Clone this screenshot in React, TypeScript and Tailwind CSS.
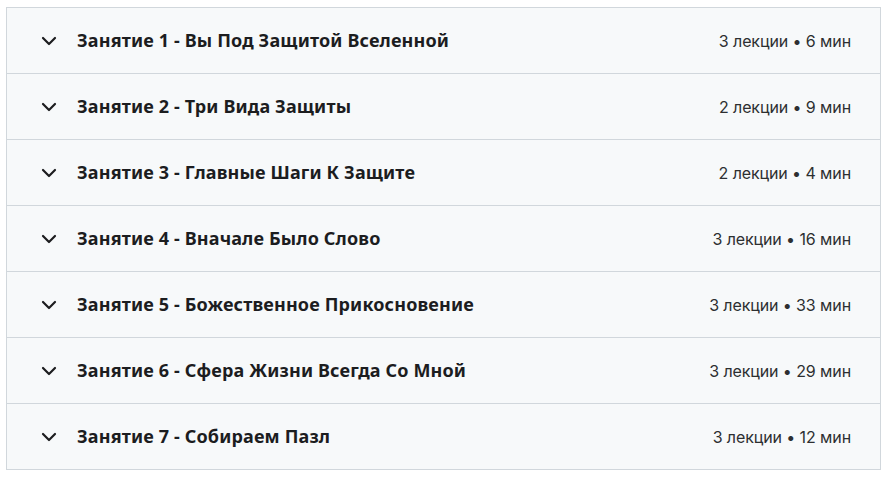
import { ChevronDown } from "lucide-react";

const lessons = [
  { title: "Занятие 1 - Вы Под Защитой Вселенной", meta: "3 лекции • 6 мин" },
  { title: "Занятие 2 - Три Вида Защиты", meta: "2 лекции • 9 мин" },
  { title: "Занятие 3 - Главные Шаги К Защите", meta: "2 лекции • 4 мин" },
  { title: "Занятие 4 - Вначале Было Слово", meta: "3 лекции • 16 мин" },
  { title: "Занятие 5 - Божественное Прикосновение", meta: "3 лекции • 33 мин" },
  { title: "Занятие 6 - Сфера Жизни Всегда Со Мной", meta: "3 лекции • 29 мин" },
  { title: "Занятие 7 - Собираем Пазл", meta: "3 лекции • 12 мин" },
];

export default function App() {
  return (
    <div className="min-h-screen bg-white pl-[6px] pt-[7px] text-[#1c1d1f]">
      <div className="w-[875px] border border-[#d1d7dc] divide-y divide-[#d1d7dc] bg-[#f7f9fa]">
        {lessons.map((lesson) => (
          <div
            key={lesson.title}
            className="box-content flex h-[65px] items-center justify-between pl-[30px] pr-[29px] cursor-pointer"
          >
            <div className="flex items-center gap-[16px]">
              <ChevronDown size={24} strokeWidth={2.2} className="text-[#1c1d1f]" />
              <span className="font-['Noto_Sans',sans-serif] text-[18px] font-bold tracking-[0.15px]">
                {lesson.title}
              </span>
            </div>
            <span className="font-['Inter',sans-serif] text-[16px] tracking-[-0.1px] text-[#2d2f31]">
              {lesson.meta}
            </span>
          </div>
        ))}
      </div>
    </div>
  );
}
